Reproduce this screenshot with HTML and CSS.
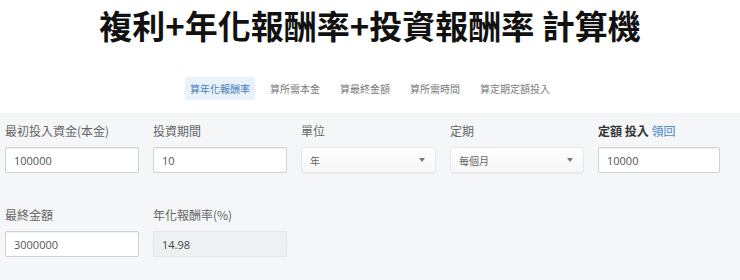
FILE: index.html
```html
<!DOCTYPE html>
<html lang="zh-Hant">
<head>
<meta charset="utf-8">
<title>複利計算機</title>
<link rel="stylesheet" href="styles.css">
</head>
<body>
<h1 class="title">複利+年化報酬率+投資報酬率 計算機</h1>
<nav class="tabs">
  <a class="tab active">算年化報酬率</a>
  <a class="tab">算所需本金</a>
  <a class="tab">算最終金額</a>
  <a class="tab">算所需時間</a>
  <a class="tab">算定期定額投入</a>
</nav>
<section class="panel">
  <div class="row">
    <div class="field">
      <label class="label">最初投入資金(本金)</label>
      <div class="input">100000</div>
    </div>
    <div class="field">
      <label class="label">投資期間</label>
      <div class="input">10</div>
    </div>
    <div class="field">
      <label class="label">單位</label>
      <div class="select"><span class="sel-text">年</span><span class="caret"></span></div>
    </div>
    <div class="field">
      <label class="label">定期</label>
      <div class="select"><span class="sel-text">每個月</span><span class="caret"></span></div>
    </div>
    <div class="field">
      <label class="label"><b class="strong">定額 投入</b> <span class="link">領回</span></label>
      <div class="input">10000</div>
    </div>
  </div>
  <div class="row row2">
    <div class="field">
      <label class="label">最終金額</label>
      <div class="input">3000000</div>
    </div>
    <div class="field">
      <label class="label">年化報酬率(%)</label>
      <div class="input readonly">14.98</div>
    </div>
  </div>
</section>
</body>
</html>
```
FILE: styles.css
```css
html, body {
  margin: 0;
  padding: 0;
  background: #ffffff;
}
body {
  font-family: "Noto Sans CJK TC", "Noto Sans", sans-serif;
  color: #333;
  height: 280px;
  overflow: hidden;
  display: flex;
  flex-direction: column;
}
.title {
  margin: 0;
  padding-top: 5px;
  font-size: 33px;
  line-height: 40px;
  font-weight: 700;
  text-align: center;
  color: #111;
}
.tabs {
  display: flex;
  justify-content: center;
  gap: 10px;
  margin-top: 32px;
  height: 23px;
}
.tab {
  display: flex;
  align-items: center;
  padding: 0 5px;
  font-size: 10px;
  color: #7a7a7a;
  border-radius: 2px;
}
.tab.active {
  background: #e9f1fa;
  color: #4a7bb8;
}
.panel {
  margin-top: 13px;
  flex: 1;
  background: #f4f6f8;
  padding: 9px 5px 0 5px;
}
.row {
  display: grid;
  grid-template-columns: 134px 134px 135px 134px 122px;
  column-gap: 14px;
}
.row2 {
  margin-top: 33px;
}
.label {
  display: block;
  font-size: 12px;
  line-height: 18px;
  color: #666;
  margin-bottom: 7px;
  white-space: nowrap;
}
.strong {
  font-weight: 700;
  color: #333;
}
.link {
  color: #4a86c8;
}
.input {
  box-sizing: border-box;
  height: 26px;
  background: #fff;
  border: 1px solid #cfd2d5;
  border-radius: 2px;
  box-shadow: inset 0 1px 1px rgba(0,0,0,0.05);
  padding-left: 8px;
  display: flex;
  align-items: center;
  font-family: "Open Sans", "Noto Sans", sans-serif;
  font-size: 11px;
  color: #555;
}
.input.readonly {
  background: #eef0f2;
  border-color: #e3e5e8;
  box-shadow: none;
  color: #444;
}
.select {
  box-sizing: border-box;
  height: 26px;
  background: linear-gradient(#ffffff, #f6f6f6);
  border: 1px solid #e5e7e9;
  border-radius: 3px;
  box-shadow: 0 1px 1px rgba(0,0,0,0.04);
  padding: 0 10px 0 8px;
  display: flex;
  align-items: center;
  justify-content: space-between;
  font-size: 10px;
  color: #666;
}
.caret {
  width: 0;
  height: 0;
  border-left: 3px solid transparent;
  border-right: 3px solid transparent;
  border-top: 4px solid #777;
}
```
